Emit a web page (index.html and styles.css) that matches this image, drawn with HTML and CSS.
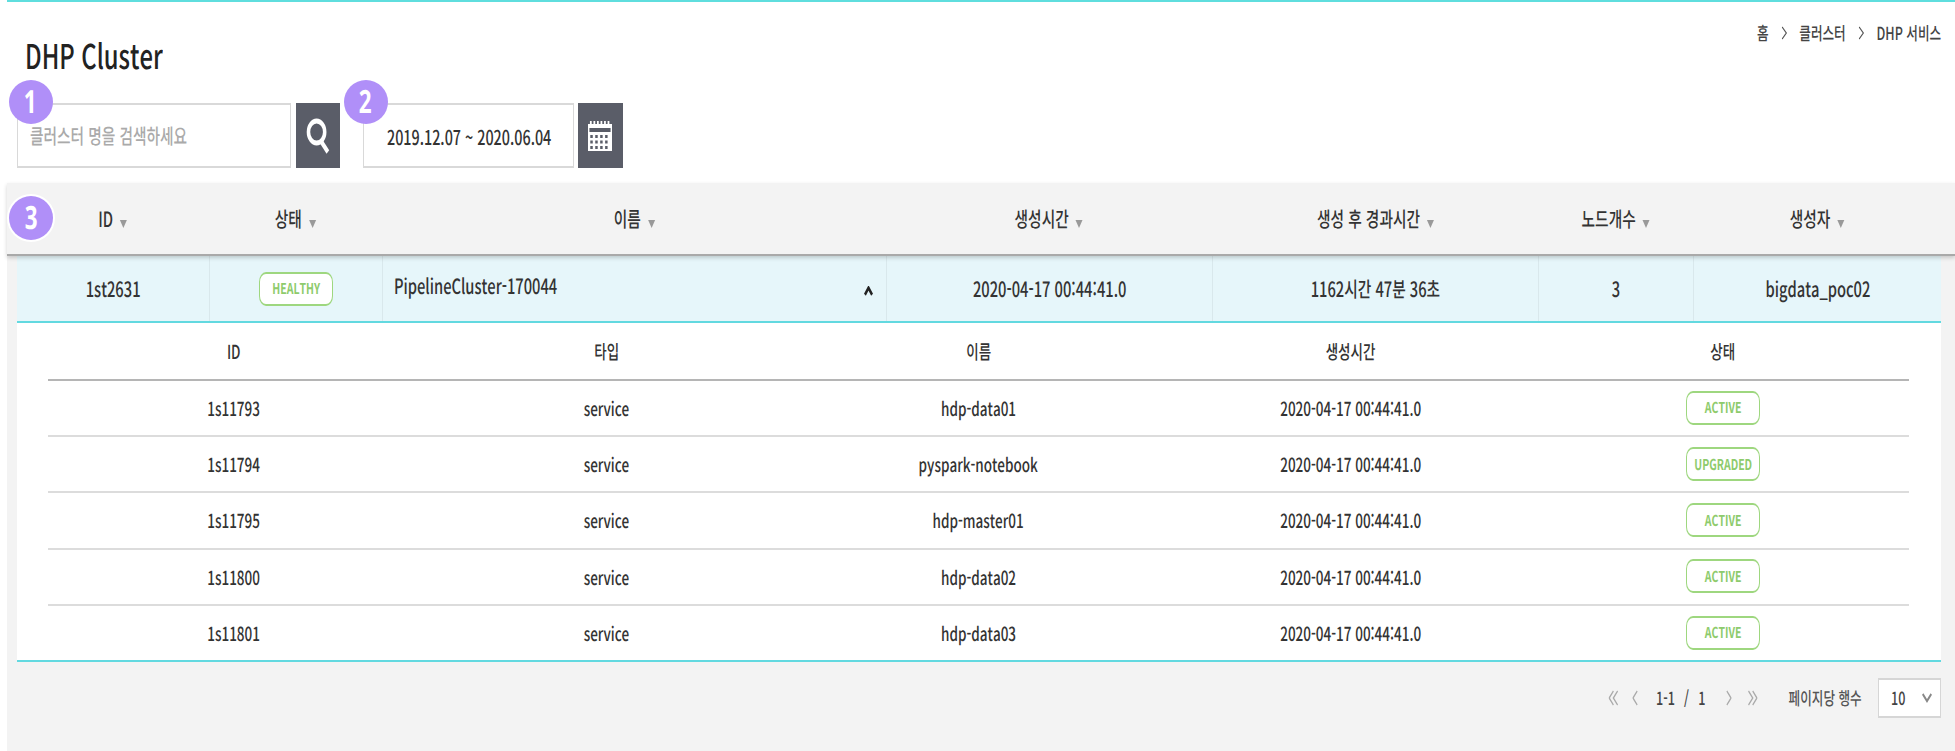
FILE: index.html
```html
<!DOCTYPE html>
<html lang="ko">
<head>
<meta charset="utf-8">
<title>DHP Cluster</title>
<link rel="stylesheet" href="styles.css">
</head>
<body>
<div class="page">
  <header class="top">
    <div class="top-row">
      <h1 class="title"><span class="sq sq-left">DHP Cluster</span></h1>
      <nav class="crumbs">
        <span>홈</span>
        <svg class="crumb-sep" viewBox="0 0 8 14"><path d="M1 1l6 6-6 6"/></svg>
        <span>클러스터</span>
        <svg class="crumb-sep" viewBox="0 0 8 14"><path d="M1 1l6 6-6 6"/></svg>
        <span>DHP 서비스</span>
      </nav>
    </div>
    <div class="filters">
      <div class="field field-search">
        <span class="step step-a"><span class="sq">1</span></span>
        <span class="sq sq-left placeholder">클러스터 명을 검색하세요</span>
      </div>
      <button class="icon-btn">
        <svg class="icon-search" viewBox="0 0 34 36" preserveAspectRatio="none"><ellipse cx="15" cy="14" rx="11.5" ry="11" /><path d="M22 24l9 10"/></svg>
      </button>
      <div class="field field-date">
        <span class="step step-b"><span class="sq">2</span></span>
        <span class="sq sq-left">2019.12.07 ~ 2020.06.04</span>
      </div>
      <button class="icon-btn icon-btn-cal">
        <svg class="icon-cal" viewBox="0 0 34 30" preserveAspectRatio="none">
          <rect x="0" y="3" width="34" height="27" fill="#fff"/>
          <rect x="2" y="7" width="30" height="4" fill="#5a5d68"/>
          <path class="cal-rings" d="M4 0v3M9 0v3M14 0v3M19 0v3M24 0v3M29 0v3"/>
          <path class="cal-dots" d="M5 14v3M12 14v3M19 14v3M26 14v3M5 19.500v3M12 19.500v3M19 19.500v3M26 19.500v3M5 25v3M12 25v3M19 25v3M26 25v3"/>
        </svg>
      </button>
    </div>
  </header>

  <main class="content">
    <div class="thead">
      <span class="step step-c"><span class="sq">3</span></span>
      <div class="th"><span class="sq">ID<i class="sort"></i></span></div>
      <div class="th"><span class="sq">상태<i class="sort"></i></span></div>
      <div class="th"><span class="sq">이름<i class="sort"></i></span></div>
      <div class="th"><span class="sq">생성시간<i class="sort"></i></span></div>
      <div class="th"><span class="sq">생성 후 경과시간<i class="sort"></i></span></div>
      <div class="th"><span class="sq">노드개수<i class="sort"></i></span></div>
      <div class="th"><span class="sq">생성자<i class="sort"></i></span></div>
    </div>

    <div class="wrap">
      <div class="row">
        <div class="td"><span class="sq">1st2631</span></div>
        <div class="td"><span class="badge"><span class="sq">HEALTHY</span></span></div>
        <div class="td td-name"><span class="sq sq-left name">PipelineCluster-170044</span>
          <svg class="caret" viewBox="0 0 10 8" preserveAspectRatio="none"><path d="M1 7l4-5.500L9 7"/></svg>
        </div>
        <div class="td"><span class="sq">2020-04-17 00:44:41.0</span></div>
        <div class="td"><span class="sq">1162시간 47분 36초</span></div>
        <div class="td"><span class="sq">3</span></div>
        <div class="td"><span class="sq">bigdata_poc02</span></div>
      </div>

      <div class="detail">
        <div class="sub-row sub-head"><div><span class="sq">ID</span></div><div><span class="sq">타입</span></div><div><span class="sq">이름</span></div><div><span class="sq">생성시간</span></div><div><span class="sq">상태</span></div></div>
        <div class="sub-row"><div><span class="sq">1s11793</span></div><div><span class="sq">service</span></div><div><span class="sq">hdp-data01</span></div><div><span class="sq">2020-04-17 00:44:41.0</span></div><div><span class="badge"><span class="sq">ACTIVE</span></span></div></div>
        <div class="sub-row"><div><span class="sq">1s11794</span></div><div><span class="sq">service</span></div><div><span class="sq">pyspark-notebook</span></div><div><span class="sq">2020-04-17 00:44:41.0</span></div><div><span class="badge"><span class="sq">UPGRADED</span></span></div></div>
        <div class="sub-row"><div><span class="sq">1s11795</span></div><div><span class="sq">service</span></div><div><span class="sq">hdp-master01</span></div><div><span class="sq">2020-04-17 00:44:41.0</span></div><div><span class="badge"><span class="sq">ACTIVE</span></span></div></div>
        <div class="sub-row"><div><span class="sq">1s11800</span></div><div><span class="sq">service</span></div><div><span class="sq">hdp-data02</span></div><div><span class="sq">2020-04-17 00:44:41.0</span></div><div><span class="badge"><span class="sq">ACTIVE</span></span></div></div>
        <div class="sub-row"><div><span class="sq">1s11801</span></div><div><span class="sq">service</span></div><div><span class="sq">hdp-data03</span></div><div><span class="sq">2020-04-17 00:44:41.0</span></div><div><span class="badge"><span class="sq">ACTIVE</span></span></div></div>
      </div>

      <div class="pager">
        <div class="pager-nav">
          <svg class="pg pg-double" viewBox="0 0 14 16"><path d="M7 1L1 8l6 7M13 1L7 8l6 7"/></svg>
          <svg class="pg pg-single pg-prev" viewBox="0 0 8 16"><path d="M7 1L1 8l6 7"/></svg>
          <span class="pg-count">1-1</span><span class="pg-slash">/</span><span>1</span>
          <svg class="pg pg-single pg-next" viewBox="0 0 8 16"><path d="M1 1l6 7-6 7"/></svg>
          <svg class="pg pg-double" viewBox="0 0 14 16"><path d="M1 1l6 7-6 7M7 1l6 7-6 7"/></svg>
          <span class="pg-label">페이지당 행수</span>
        </div>
        <div class="select"><span class="sq sq-left">10</span>
          <svg class="select-arrow" viewBox="0 0 14 10" preserveAspectRatio="none"><path d="M1 1l6 7 6-7"/></svg>
        </div>
      </div>
    </div>
  </main>
</div>
</body>
</html>
```

FILE: styles.css
```css
html, body {
  margin: 0;
  padding: 0;
  height: 751px;
  overflow: hidden;
  background: #fff;
}

.page {
  height: 751px;
  font-family: "Noto Sans CJK KR", "Noto Sans", sans-serif;
  font-size: 20px;
  font-weight: 500;
  font-kerning: none;
  font-variant-ligatures: none;
  font-feature-settings: "calt" 0, "liga" 0, "ccmp" 0, "kern" 0;
  text-rendering: geometricPrecision;
  color: #333;
  display: flex;
  flex-direction: column;
}

/* The reference is a squeezed capture: glyphs are narrowed horizontally */
.sq {
  display: inline-block;
  white-space: nowrap;
  transform: scaleX(.7);
}

.sq-left {
  transform-origin: 0 50%;
}

.top {
  height: 183px;
  box-sizing: border-box;
  margin-left: 7px;
  padding: 0 0 0 9.5px;
  border-top: 2px solid #5fdede;
  display: flex;
  flex-direction: column;
}

.top-row {
  display: flex;
  justify-content: space-between;
  align-items: flex-start;
  height: 75px;
}

.crumbs {
  margin: 16px 14px 0 0;
  display: flex;
  align-items: center;
  gap: 18px;
  font-size: 18px;
  line-height: 30px;
  color: #444;
  white-space: nowrap;
  transform: scaleX(.7);
  transform-origin: 100% 50%;
}

.crumb-sep {
  width: 8px;
  height: 14px;
  fill: none;
  stroke: #555;
  stroke-width: 1.4;
}

.title {
  margin: 31px 0 0 8.5px;
  font-size: 34px;
  font-weight: 500;
  line-height: 44px;
  color: #222;
}

.filters {
  display: flex;
  margin-top: 26px;
}

.field {
  position: relative;
  box-sizing: border-box;
  height: 65px;
  border: solid #d9d9d9;
  border-width: 2px 1.5px;
  background: #fff;
  display: flex;
  align-items: center;
  font-size: 20.5px;
}

.field-search {
  width: 274.5px;
  padding-left: 12px;
}

.field-date {
  width: 211.5px;
  margin-left: 22.5px;
  padding-left: 23px;
}

.placeholder {
  color: #aaa;
  font-size: 21px;
}

.icon-btn {
  width: 44.5px;
  height: 65px;
  margin: 0 0 0 4.5px;
  padding: 0;
  border: 0;
  background: #5a5d68;
  display: flex;
  align-items: center;
  justify-content: center;
}

.icon-btn-cal {
  margin-left: 4px;
}

.icon-search {
  width: 24px;
  height: 36px;
  fill: none;
  stroke: #fff;
  stroke-width: 5;
}

.icon-cal {
  width: 24px;
  height: 30px;
}

.cal-rings, .cal-dots {
  fill: none;
  stroke-width: 3.5;
}

.cal-rings { stroke: #fff; stroke-width: 2.5; }
.cal-dots { stroke: #5a5d68; }

.step {
  position: absolute;
  width: 44px;
  height: 44px;
  border-radius: 50%;
  background: #b08ff8;
  color: #fff;
  font-family: "Noto Sans", sans-serif;
  font-size: 32px;
  font-weight: 700;
  line-height: 44px;
  text-align: center;
  z-index: 2;
}

.step-a { left: -9px; top: -25px; }
.step-b { left: -20px; top: -25px; }

.step-c {
  left: 2px;
  top: 13px;
  box-shadow: 0 0 0 2px #fff;
}

.content {
  flex: 1;
  margin-left: 7px;
  background: #f3f3f3;
  display: flex;
  flex-direction: column;
}

.thead {
  position: relative;
  z-index: 1;
  box-sizing: border-box;
  height: 73px;
  padding: 0 14px 0 9.5px;
  border-bottom: 2px solid #a9a9a9;
  box-shadow: 0 2px 4px rgba(0, 0, 0, .18);
  background: #f3f3f3;
  display: grid;
  grid-template-columns: 192.5px 173px 504px 326px 326px 155px 248px;
  align-items: center;
}

.th {
  text-align: center;
  font-size: 21px;
  line-height: 28px;
}

.sort {
  display: inline-block;
  margin-left: 10px;
  vertical-align: -1px;
  border-left: 5px solid transparent;
  border-right: 5px solid transparent;
  border-top: 8px solid #999;
}

.wrap {
  flex: 1;
  padding: 0 14px 0 9.5px;
  display: flex;
  flex-direction: column;
}

.row {
  box-sizing: border-box;
  height: 67px;
  background: #e6f6fa;
  border-bottom: 2px solid #62d9e0;
  font-size: 21px;
  display: grid;
  grid-template-columns: 192.5px 173px 504px 326px 326px 155px 248px;
}

.td {
  display: flex;
  align-items: center;
  justify-content: center;
  border-left: 1px solid #d9e8ec;
}

.td:first-child {
  border-left: 0;
}

.td-name {
  justify-content: space-between;
  padding: 0 13px 0 11px;
}

.name {
  margin-top: -5px;
}

.caret {
  width: 9px;
  height: 10px;
  fill: none;
  stroke: #222;
  stroke-width: 2.6;
  margin-top: 4px;
}

.badge {
  box-sizing: border-box;
  display: inline-flex;
  align-items: center;
  justify-content: center;
  width: 74px;
  height: 34px;
  border: solid #9ed77f;
  border-width: 2px 1.5px;
  border-radius: 7px / 10px;
  background: #fff;
  color: #8ecb6c;
  font-size: 15px;
  font-weight: 700;
}

.sub-row .badge {
  margin-top: -2px;
}

.detail {
  background: #fff;
  padding: 0 32px 0 31.5px;
  border-bottom: 2px solid #62d9e0;
  font-size: 19.3px;
  display: flex;
  flex-direction: column;
}

.sub-row {
  box-sizing: border-box;
  height: 56.2px;
  border-bottom: 2px solid #dcdcdc;
  display: grid;
  grid-template-columns: repeat(5, 1fr);
  align-items: center;
  text-align: center;
}

.sub-row:last-child {
  height: 54.2px;
  border-bottom: 0;
}

.sub-head {
  height: 58px;
  border-bottom-color: #b5b5b5;
  padding-bottom: 1px;
}

.pager {
  display: flex;
  align-items: center;
  justify-content: flex-end;
  margin-top: 16px;
  font-size: 18px;
  color: #444;
}

.pager-nav {
  display: flex;
  align-items: center;
  margin-right: 16px;
  white-space: nowrap;
  transform: scaleX(.7);
  transform-origin: 100% 50%;
}

.pg {
  height: 16px;
  fill: none;
  stroke: #aaa;
  stroke-width: 1.8;
}

.pg-double { width: 14px; }
.pg-single { width: 8px; margin: 0 23px; }
.pg-prev { margin-left: 20px; }

.pg-count { margin-left: 3px; }
.pg-slash { margin: 0 13px; }
.pg-next { margin-left: 30px; }

.pg-label {
  margin-left: 44px;
  color: #555;
}

.select {
  box-sizing: border-box;
  width: 63px;
  height: 40px;
  padding: 0 8px 0 12px;
  border: solid #d6d6d6;
  border-width: 2px 1.5px;
  background: #fff;
  display: flex;
  align-items: center;
  justify-content: space-between;
}

.select-arrow {
  width: 10px;
  height: 10px;
  fill: none;
  stroke: #888;
  stroke-width: 2.6;
}
```
